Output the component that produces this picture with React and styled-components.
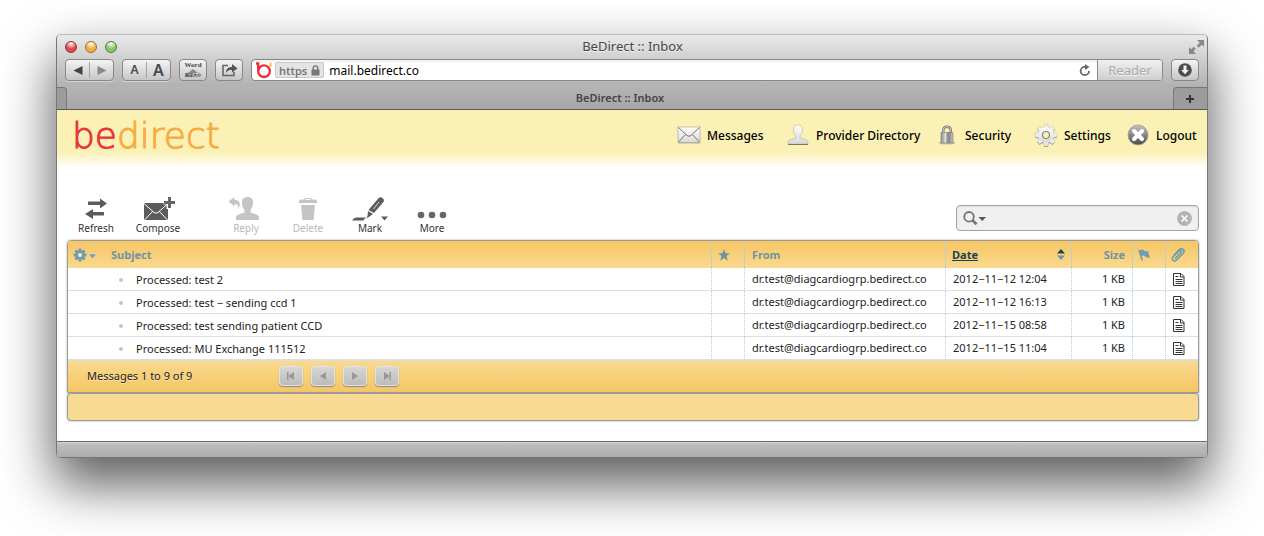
import React from 'react';
import styled, {createGlobalStyle} from 'styled-components';

const GlobalStyle = createGlobalStyle`
  * {
    box-sizing: border-box;
  }

  body {
    margin: 0;
    background: #fff;
    color: #222;
    font-family: 'Noto Sans', 'Open Sans', sans-serif;
    font-size: 11px;
  }

  button, input {
    font: inherit;
    color: inherit;
    border: none;
    padding: 0;
    background: none;
  }

  svg {
    display: block;
    flex: none;
  }
`;

const Desktop = styled.div`
  padding: 34px 56px 78px;
`;

const Window = styled.div`
  border: 1px solid #777;
  border-top-color: #bbb;
  border-radius: 5px;
  overflow: hidden;
  background: #fff;
  box-shadow: 0 25px 52px 2px rgba(0, 0, 0, 0.64);
`;

const Chrome = styled.div`
  background: linear-gradient(#e9e9e9, #b1b1b1);
`;

const TitleBar = styled.div`
  display: grid;
  grid-template-columns: 60px 1fr 64px;
  align-items: center;
  height: 23px;
  padding: 0 3px 0 8px;
  font-size: 13px;
  line-height: 21px;
  color: #444;
  text-align: center;
  text-shadow: 0 1px 0 #f4f4f4;
`;

const Lights = styled.div`
  display: flex;
  gap: 8px;
`;

const Light = styled.button`
  width: 12px;
  height: 12px;
  border-radius: 50%;
  border: 1px solid ${props => props.$edge};
  background: radial-gradient(circle at 50% 15%, #fff, ${props => props.$color} 55%, ${props => props.$color});
`;

const Expand = styled.button`
  justify-self: end;
`;

const BrowserBar = styled.div`
  display: flex;
  gap: 8px;
  height: 29px;
  padding: 1px 8px 6px;
`;

const ChromeButton = styled.button`
  display: flex;
  flex-direction: column;
  align-items: center;
  justify-content: center;
  flex: none;
  width: 28px;
  height: 22px;
  border: 1px solid #888;
  border-radius: 4px;
  background: linear-gradient(#f4f4f4, #c6c6c6);
  color: #444;
`;

const ButtonPair = styled.div`
  display: flex;
  flex: none;
  width: 49px;
  height: 22px;
  border: 1px solid #888;
  border-radius: 4px;
  background: linear-gradient(#f4f4f4, #c6c6c6);
  box-shadow: 0 1px 0 #d4d4d4;
`;

const PairButton = styled.button`
  display: flex;
  flex: 1;
  align-items: center;
  justify-content: center;
  margin: 2px 0;
  color: #4a4a4a;
  font-size: ${props => props.$size || 12}px;
  font-weight: 600;
  line-height: 16px;

  & + & {
    border-left: 1px solid #a5a5a5;
  }
`;

const WordTop = styled.span`
  font-family: 'Liberation Serif', serif;
  font-size: 7px;
  font-weight: bold;
  line-height: 7px;
`;

const WordBottom = styled.span`
  font-family: 'Noto Sans CJK TC', sans-serif;
  font-size: 4px;
  font-weight: bold;
  line-height: 5px;
`;

const AddressBar = styled.div`
  display: flex;
  flex: 1;
  align-items: center;
  height: 22px;
  padding-left: 3px;
  overflow: hidden;
  border: 1px solid #888;
  border-radius: 4px;
  background: linear-gradient(#f0f0f0, #fff 4px);
`;

const Secure = styled.span`
  display: flex;
  align-items: center;
  gap: 4px;
  height: 16px;
  margin: 0 5px 0 3px;
  padding: 0 3px;
  border: 1px solid #c9c9c9;
  border-radius: 2px;
  background: #e4e4e4;
  color: #777;
  font-weight: 600;
`;

const Address = styled.input`
  flex: 1;
  min-width: 0;
  color: #000;
  font-size: 12px;
  outline: none;
`;

const Reader = styled.button`
  align-self: stretch;
  width: 65px;
  margin-left: 6px;
  border-left: 1px solid #888;
  background: linear-gradient(#f0f0f0, #cfcfcf);
  color: #aaa;
  font-size: 13px;
  line-height: 18px;
  text-shadow: 0 1px 0 #f4f4f4;
`;

const TabBar = styled.div`
  display: flex;
  justify-content: space-between;
  height: 23px;
  border-bottom: 1px solid #5a5a5a;
  background: linear-gradient(#b4b4b4, #a6a6a6);
  color: #444;
  font-weight: 600;
  line-height: 22px;
`;

const TabStub = styled.span`
  width: 10px;
  border: 1px solid #777;
  border-width: 1px 1px 0 0;
  border-radius: 0 4px 0 0;
  background: #9c9c9c;
`;

const NewTab = styled.button`
  display: flex;
  align-items: center;
  justify-content: center;
  width: 34px;
  border: 1px solid #777;
  border-width: 1px 0 0 1px;
  border-radius: 4px 0 0 0;
  background: #9c9c9c;
`;

const Header = styled.header`
  display: flex;
  justify-content: space-between;
  height: 58px;
  padding: 0 10px 0 15px;
  background: linear-gradient(#fbf1b5 72%, #fff);
`;

const Logo = styled.a`
  color: #f6ab40;
  font-family: 'DejaVu Sans', 'DejaVu Sans Light', sans-serif;
  font-size: 36px;
  font-weight: 200;
  line-height: 52px;
  text-decoration: none;
  -webkit-text-stroke: 1px;
`;

const LogoBe = styled.span`
  color: #e8333c;
`;

const Nav = styled.nav`
  display: grid;
  grid-template-columns: 109px 149px 99px 92px 71px;
  height: 50px;
`;

const NavLink = styled.a`
  display: flex;
  align-items: center;
  gap: 6px;
  color: #000;
  font-size: 12px;
  font-weight: 500;
  text-decoration: none;
  white-space: nowrap;
`;

const Mail = styled.main`
  padding: 28px 8px 20px 10px;
`;

const Toolbar = styled.div`
  display: flex;
  align-items: flex-start;
  justify-content: space-between;
  height: 44px;
`;

const Tools = styled.div`
  display: flex;
  margin-left: -2px;
`;

const Tool = styled.button`
  display: flex;
  flex-direction: column;
  align-items: center;
  width: 62px;
  margin-left: ${props => (props.$apart ? 26 : 0)}px;
  color: ${props => (props.disabled ? '#b8b8b8' : '#333')};
  font-size: 10px;
  line-height: 14px;
`;

const Search = styled.label`
  display: flex;
  align-items: center;
  gap: 2px;
  width: 243px;
  height: 26px;
  margin-top: 9px;
  padding: 0 6px;
  border: 1px solid #a3a3a3;
  border-radius: 4px;
  background: #f0f0f0;
  box-shadow: inset 0 1px 2px #ddd;
`;

const SearchInput = styled.input`
  flex: 1;
  min-width: 0;
  outline: none;
`;

const ListBox = styled.section`
  border: 1px solid #9a9a9a;
  border-radius: 4px 4px 0 0;
  overflow: hidden;
  box-shadow: 0 0 2px #999;
`;

const List = styled.table`
  width: 100%;
  table-layout: fixed;
  border-spacing: 0;
  white-space: nowrap;
`;

const Col = styled.col`
  width: ${props => props.$width}px;
`;

const HeadRow = styled.tr`
  background: linear-gradient(#f6c663, #f9d98f);
`;

const Head = styled.th`
  height: 27px;
  padding: 0 ${props => props.$pad || 7}px;
  border-left: ${props => (props.$plain ? 'none' : '1px solid #c2cfc6')};
  color: #7193a2;
  font-weight: 700;
  text-align: ${props => props.$align || 'left'};
`;

const HeadInner = styled.span`
  display: flex;
  align-items: center;
  justify-content: space-between;
`;

const SortLink = styled.a`
  color: #1c4053;
`;

const Cell = styled.td`
  height: 23px;
  padding: 0 ${props => props.$pad || 7}px;
  border-bottom: 1px solid #ddd;
  border-left: ${props => (props.$plain ? 'none' : '1px dotted #b0cbd6')};
  line-height: 20px;
  text-align: ${props => props.$align || 'left'};
`;

const Subject = styled.a`
  display: flex;
  align-items: center;
  gap: 13px;
  padding: 2px 0 0 8px;
  color: #222;
  text-decoration: none;

  &::before {
    content: '';
    width: 4px;
    height: 4px;
    border-radius: 50%;
    background: #c4c4c4;
  }
`;

const ListFooter = styled.div`
  display: flex;
  align-items: center;
  height: 32px;
  padding: 0 0 2px 19px;
  border-top: 1px solid #ddd;
  background: linear-gradient(#f9d98f, #f6c663);
`;

const Count = styled.span`
  width: 192px;
  text-shadow: 0 1px 0 #fbe6b5;
`;

const Pager = styled.div`
  display: flex;
  gap: 8px;
`;

const PageButton = styled.button`
  display: flex;
  align-items: center;
  justify-content: center;
  width: 24px;
  height: 20px;
  border: 1px solid #e4e4e4;
  border-radius: 4px;
  background: linear-gradient(#d6d6d6, #bcbcbc);
  box-shadow: 0 1px 1px #888;
`;

const Preview = styled.section`
  height: 28px;
  border: 1px solid #9a9a9a;
  border-radius: 4px;
  background: #f8da92;
  box-shadow: 0 0 2px #999;
`;

const StatusBar = styled.footer`
  height: 16px;
  border-top: 1px solid #6a6a6a;
  background: linear-gradient(#d8d8d8, #bdbdbd 2px, #adadad);
`;

const Arrow = ({left, color = '#444'}) => (
  <svg width="10" height="9" viewBox="0 0 10 9">
    <path d={left ? 'M9.5 0v9L.5 4.5z' : 'M.5 0v9l9-4.5z'} fill={color} />
  </svg>
);

const ExpandIcon = () => (
  <svg width="15" height="14" viewBox="0 0 15 14" fill="#888">
    <path d="M8 0h7v7l-2.2-2.2-3 3-2.1-2 3-3zM0 7l2.2 2.2 2.5-2.5 2.1 2.1-2.5 2.5L7 14H0z" />
  </svg>
);

const ShareIcon = () => (
  <svg width="17" height="14" viewBox="0 0 17 14">
    <path d="M7 2.5H2v10h11V9" fill="none" stroke="#666" strokeWidth="1.6" />
    <path d="M5 10c0-4 2-6 6-6V1l5.5 4.5L11 9.5V7C8 7 6.5 7.5 5 10z" fill="#555" />
  </svg>
);

const Favicon = () => (
  <svg width="17" height="17" viewBox="0 0 17 17" fill="none" stroke="#ea3340" strokeWidth="2.4">
    <path d="M1 1.500h2.200V9" />
    <circle cx="9" cy="9.200" r="5.800" />
    <path d="M15.500 1v4" stroke="#f5b233" strokeWidth="1.8" />
  </svg>
);

const SmallLock = () => (
  <svg width="9" height="11" viewBox="0 0 9 11">
    <path d="M2.2 5V3.2a2.3 2.3 0 0 1 4.6 0V5" fill="none" stroke="#777" strokeWidth="1.4" />
    <rect x=".5" y="4.5" width="8" height="6" rx=".5" fill="#777" />
  </svg>
);

const ReloadIcon = () => (
  <svg width="12" height="13" viewBox="0 0 12 13">
    <path d="M10 7a4.2 4.2 0 1 1-4.2-4.2H7" fill="none" stroke="#666" strokeWidth="1.8" />
    <path d="M6 0l4.5 3L6 6z" fill="#666" />
  </svg>
);

const DownloadIcon = () => (
  <svg width="14" height="14" viewBox="0 0 14 14">
    <circle cx="7" cy="7" r="6.8" fill="#4d4d4d" />
    <path d="M5.5 2.5h3V7h2.3L7 11.2 3.2 7h2.3z" fill="#f2f2f2" />
  </svg>
);

const PlusIcon = () => (
  <svg width="8" height="8" viewBox="0 0 8 8" stroke="#333" strokeWidth="2">
    <path d="M4 0v8M0 4h8" />
  </svg>
);

const Metal = ({id, dark}) => (
  <defs>
    <linearGradient id={id} x1="0" y1="0" x2="0" y2="1">
      <stop offset="0" stopColor={dark ? '#c4c4c4' : '#fff'} />
      <stop offset="1" stopColor={dark ? '#4a4a4a' : '#d8d8d8'} />
    </linearGradient>
  </defs>
);

const MessagesIcon = () => (
  <svg width="24" height="18" viewBox="0 0 24 18">
    <Metal id="paper" />
    <rect x="1" y="1.5" width="22" height="16" fill="#a39c78" opacity=".7" />
    <rect x="1" y="1" width="22" height="15.5" fill="url(#paper)" stroke="#a29f91" strokeWidth=".6" />
    <path d="M1.5 1.5l8.5 8q2 1.6 4 0l8.5-8M1.5 16l7-7.5M22.5 16l-7-7.5" fill="none" stroke="#77746a" />
  </svg>
);

const PersonIcon = () => (
  <svg width="24" height="22" viewBox="0 0 24 22">
    <Metal id="person" />
    <path d="M12 1c3.2 0 4.8 2.2 4.6 5-.2 2.5-1.2 4.500-2.600 5.500v2.300l6.500 2.200q1.500.8 1.500 2.500V20H2v-1.500Q2 16.800 3.500 16l6.500-2.200v-2.300C8.600 10.500 7.600 8.500 7.400 6 7.200 3.200 8.800 1 12 1z" fill="url(#person)" stroke="#b5b097" strokeWidth=".6" />
    <path d="M2 20.5h20" stroke="#77746a" />
  </svg>
);

const LockIcon = () => (
  <svg width="24" height="20" viewBox="0 0 24 20">
    <defs>
      <linearGradient id="lock">
        <stop offset="0" stopColor="#888" />
        <stop offset=".35" stopColor="#eee" />
        <stop offset=".6" stopColor="#888" />
        <stop offset="1" stopColor="#c4c4c4" />
      </linearGradient>
    </defs>
    <ellipse cx="12" cy="18" rx="8.5" ry="1.6" fill="#b5ad80" opacity=".7" />
    <path d="M8.2 8V5.5c0-5 7.6-5 7.6 0V8" fill="none" stroke="#666" strokeWidth="2.4" />
    <path d="M8.2 8V5.5c0-5 7.6-5 7.6 0V8" fill="none" stroke="#ddd" strokeWidth="1" />
    <path d="M6 7.5h12V18H6z" fill="url(#lock)" stroke="#777" strokeWidth=".6" />
    <path d="M9 8v10M12 8v10M15 8v10" stroke="#777" strokeWidth=".4" />
  </svg>
);

const teeth = [0, 45, 90, 135, 180, 225, 270, 315];

const SettingsIcon = () => (
  <svg width="24" height="24" viewBox="-12 -12 24 24">
    <Metal id="gear" />
    <g transform="translate(0 1)" fill="#a39f87">
      {teeth.map(a => (
        <path key={a} d="M-2.8-6L-1.8-11h3.6L2.8-6z" transform={`rotate(${a})`} />
      ))}
      <circle r="8" />
    </g>
    {teeth.map(a => (
      <path key={a} d="M-2.8-6L-1.8-11h3.6L2.8-6z" transform={`rotate(${a})`} fill="#ececea" stroke="#bdb99f" strokeWidth=".4" />
    ))}
    <circle r="7.8" fill="url(#gear)" />
    <circle r="3.5" fill="#fbf1b5" stroke="#888573" strokeWidth="1.2" />
  </svg>
);

const LogoutIcon = () => (
  <svg width="24" height="22" viewBox="0 0 24 22">
    <Metal id="exit" dark />
    <circle cx="12" cy="11" r="10" fill="url(#exit)" stroke="#9c9c94" strokeWidth=".8" />
    <path d="M8 7l8 8M16 7l-8 8" stroke="#fff" strokeWidth="4" strokeLinecap="round" />
  </svg>
);

const RefreshIcon = () => (
  <svg width="24" height="25" viewBox="0 0 24 25" fill="#5c5c5c">
    <path d="M4 5.5h12V2.5L23 7.5l-7 5V9H4zM20 16H9V13L1 18l8 5v-3.5h11z" />
  </svg>
);

const ComposeIcon = () => (
  <svg width="34" height="25" viewBox="0 0 34 25">
    <path d="M3 7h24v17H3z" fill="#5c5c5c" />
    <path d="M3 7.5l10 9q2 1.4 4 0l10-9M3.5 24l8.5-9M26.5 24l-8.5-9" fill="none" stroke="#fff" strokeWidth="1" />
    <path d="M28 0v13M22.5 6H34" stroke="#fff" strokeWidth="5" />
    <path d="M28.5 1v11M23 6.5h11" stroke="#666" strokeWidth="3" />
  </svg>
);

const ReplyIcon = () => (
  <svg width="34" height="25" viewBox="0 0 34 25" fill="#c4c4c4">
    <path d="M18.500 1c4.200 0 5.800 2.800 5.500 6.200-.2 3-1.200 5.300-2.500 6.800v2.500l6 2q2.500.8 2.500 3V24H7v-2.500q0-2.200 2.500-3l6-2V14c-1.300-1.500-2.300-3.800-2.500-6.800C12.700 3.800 14.300 1 18.500 1z" />
    <path d="M-.5 5.500l6-4.500v3c5 0 7 3 3.500 9.500C10 9.500 9 8 5.500 8v2.500z" />
  </svg>
);

const DeleteIcon = () => (
  <svg width="20" height="25" viewBox="0 0 20 25" fill="#c4c4c4">
    <path d="M1 7V5.500q0-2 2-2h3L7 2h6l1 1.500h3q2 0 2 2V7zM3 9h14l-1.500 15h-11z" />
    <path d="M7.5 3.5h5" stroke="#fff" />
  </svg>
);

const MarkIcon = () => (
  <svg width="36" height="25" viewBox="0 0 36 25" fill="#5c5c5c">
    <path d="M26.5 2.2Q28.5.5 30.5 2t1.300 3.500L22 17l-5.500-3z" />
    <path d="M16 15l5 3-3.5 2.5-3 2 1-2.5z" />
    <path d="M27 6l-5.500 7" stroke="#ddd" />
    <path d="M4 21.5h10L11 24.500H0q1.500-2.500 4-3zM29 20.500h7l-3.500 4z" />
  </svg>
);

const MoreIcon = () => (
  <svg width="30" height="25" viewBox="0 0 30 25" fill="#666">
    <circle cx="4" cy="19" r="3.3" />
    <circle cx="15" cy="19" r="3.3" />
    <circle cx="26" cy="19" r="3.3" />
  </svg>
);

const SearchIcon = () => (
  <svg width="23" height="15" viewBox="0 0 23 15">
    <circle cx="6" cy="5.8" r="4.8" fill="none" stroke="#777" strokeWidth="1.8" />
    <path d="M9.2 9l4.3 4.3" stroke="#777" strokeWidth="2.8" />
    <path d="M15.5 6h7.5l-3.7 4z" fill="#555" />
  </svg>
);

const ClearIcon = () => (
  <svg width="15" height="15" viewBox="0 0 15 15">
    <circle cx="7.5" cy="7.5" r="7.4" fill="#b3b3b3" />
    <path d="M4.5 4.5l6 6M10.5 4.5l-6 6" stroke="#fff" strokeWidth="1.6" />
  </svg>
);

const OptionsIcon = () => (
  <svg width="25" height="14" viewBox="-7 -7 25 14" fill="#6e9bb0">
    {teeth.map(a => (
      <path key={a} d="M-1.4-6.5h2.8v4h-2.8z" transform={`rotate(${a})`} />
    ))}
    <circle r="4.8" />
    <circle r="2.1" fill="#fbe9bd" />
    <path d="M8.5-1h8l-4 4.500z" stroke="#fbe9bd" strokeWidth=".5" />
  </svg>
);

const StarIcon = () => (
  <svg width="12" height="12" viewBox="0 0 12 12">
    <path d="M6 0l1.5 4.2H12L8.500 7l1.300 4.700L6 9l-3.800 2.700L3.500 7 0 4.200h4.500z" fill="#6a93a8" />
  </svg>
);

const SortIcon = () => (
  <svg width="8" height="11" viewBox="0 0 8 11">
    <path d="M0 4.5L4 0l4 4.5z" fill="#1c4053" />
    <path d="M0 6.5L4 11l4-4.5z" fill="#7193a2" />
  </svg>
);

const FlagIcon = () => (
  <svg width="12" height="12" viewBox="0 0 12 12">
    <path d="M.8 1L4.3 11.5" stroke="#6e9bb0" strokeWidth="1.4" />
    <path d="M1.5 1.500Q4-.5 6 1.500t4.500.3Q10 5 12 8.500q-3 .5-5-1.200T3.200 8z" fill="#6e9bb0" />
  </svg>
);

const ClipIcon = () => (
  <svg width="14" height="14" viewBox="0 0 14 14">
    <path d="M4 10.5l6-6c1.5-1.5-.3-3-1.8-1.700L2.300 8.500C-.5 11.300 3 14.500 5.500 12l6.300-6.300C15 2.500 11.200-.8 8.300 1.700L3 7" fill="none" stroke="#6e9bb0" strokeWidth="1.6" />
  </svg>
);

const DocIcon = () => (
  <svg width="12" height="13" viewBox="0 0 12 13" fill="none" stroke="#333">
    <path d="M.5.5h7.500l3 3v9H.5zM7.500.5V4H11M2.500 3.500h3M2.500 6.500h7M2.500 8.500h7M2.500 10.500h7" />
  </svg>
);

const PageIcon = ({left, end}) => (
  <svg width="10" height="10" viewBox="0 0 10 10" fill="#989898">
    <path d={left ? 'M8 1v8L2 5z' : 'M2 1v8l6-4z'} />
    {end && <path d={left ? 'M1 1h1.5v8H1z' : 'M7.5 1H9v8H7.5z'} />}
  </svg>
);

const links = [
  {label: 'Messages', Icon: MessagesIcon},
  {label: 'Provider Directory', Icon: PersonIcon},
  {label: 'Security', Icon: LockIcon},
  {label: 'Settings', Icon: SettingsIcon},
  {label: 'Logout', Icon: LogoutIcon},
];

const tools = [
  {label: 'Refresh', Icon: RefreshIcon},
  {label: 'Compose', Icon: ComposeIcon},
  {label: 'Reply', Icon: ReplyIcon, disabled: true, apart: true},
  {label: 'Delete', Icon: DeleteIcon, disabled: true},
  {label: 'Mark', Icon: MarkIcon},
  {label: 'More', Icon: MoreIcon},
];

const messages = [
  {subject: 'Processed: test 2', date: '2012−11−12 12:04'},
  {subject: 'Processed: test − sending ccd 1', date: '2012−11−12 16:13'},
  {subject: 'Processed: test sending patient CCD', date: '2012−11−15 08:58'},
  {subject: 'Processed: MU Exchange 111512', date: '2012−11−15 11:04'},
];

const BrowserChrome = () => (
  <>
    <Chrome>
      <TitleBar>
        <Lights>
          <Light aria-label="Close" $color="#e0474c" $edge="#8f3236" />
          <Light aria-label="Minimize" $color="#efb23e" $edge="#9a6c2a" />
          <Light aria-label="Zoom" $color="#86c964" $edge="#4c7f3c" />
        </Lights>
        <span>BeDirect :: Inbox</span>
        <Expand aria-label="Full screen"><ExpandIcon /></Expand>
      </TitleBar>
      <BrowserBar>
        <ButtonPair>
          <PairButton aria-label="Back"><Arrow left /></PairButton>
          <PairButton aria-label="Forward"><Arrow color="#888" /></PairButton>
        </ButtonPair>
        <ButtonPair>
          <PairButton>A</PairButton>
          <PairButton $size={16}>A</PairButton>
        </ButtonPair>
        <ChromeButton>
          <WordTop>Word</WordTop>
          <svg width="10" height="4" viewBox="0 0 10 4"><path d="M0 4l5-4 5 4z" fill="#888" /></svg>
          <WordBottom>翻譯大小</WordBottom>
        </ChromeButton>
        <ChromeButton aria-label="Share"><ShareIcon /></ChromeButton>
        <AddressBar>
          <Favicon />
          <Secure>https<SmallLock /></Secure>
          <Address aria-label="Address" defaultValue="mail.bedirect.co" />
          <button aria-label="Reload"><ReloadIcon /></button>
          <Reader disabled>Reader</Reader>
        </AddressBar>
        <ChromeButton aria-label="Downloads"><DownloadIcon /></ChromeButton>
      </BrowserBar>
    </Chrome>
    <TabBar>
      <TabStub />
      <span>BeDirect :: Inbox</span>
      <NewTab aria-label="New tab"><PlusIcon /></NewTab>
    </TabBar>
  </>
);

const MessageList = () => (
  <ListBox>
    <List>
      <colgroup>
        <Col $width={36} />
        <col />
        <Col $width={33} />
        <Col $width={201} />
        <Col $width={126} />
        <Col $width={61} />
        <Col $width={33} />
        <Col $width={33} />
      </colgroup>
      <thead>
        <HeadRow>
          <Head $plain $pad={5}><OptionsIcon /></Head>
          <Head $plain>Subject</Head>
          <Head $pad={6}><StarIcon /></Head>
          <Head>From</Head>
          <Head $pad={6}>
            <HeadInner><SortLink href="#date">Date</SortLink><SortIcon /></HeadInner>
          </Head>
          <Head $align="right">Size</Head>
          <Head $pad={5}><FlagIcon /></Head>
          <Head $pad={5}><ClipIcon /></Head>
        </HeadRow>
      </thead>
      <tbody>
        {messages.map(({subject, date}) => (
          <tr key={subject}>
            <Cell $plain />
            <Cell $plain><Subject href="#message">{subject}</Subject></Cell>
            <Cell />
            <Cell>dr.test@diagcardiogrp.bedirect.co</Cell>
            <Cell>{date}</Cell>
            <Cell $align="right">1 KB</Cell>
            <Cell />
            <Cell><DocIcon /></Cell>
          </tr>
        ))}
      </tbody>
    </List>
    <ListFooter>
      <Count>Messages 1 to 9 of 9</Count>
      <Pager>
        <PageButton disabled aria-label="First page"><PageIcon left end /></PageButton>
        <PageButton disabled aria-label="Previous page"><PageIcon left /></PageButton>
        <PageButton disabled aria-label="Next page"><PageIcon /></PageButton>
        <PageButton disabled aria-label="Last page"><PageIcon end /></PageButton>
      </Pager>
    </ListFooter>
  </ListBox>
);

const App = () => (
  <Desktop>
    <GlobalStyle />
    <Window>
      <BrowserChrome />
      <Header>
        <Logo href="#home"><LogoBe>be</LogoBe>direct</Logo>
        <Nav>
          {links.map(({label, Icon}) => (
            <NavLink key={label} href="#nav"><Icon />{label}</NavLink>
          ))}
        </Nav>
      </Header>
      <Mail>
        <Toolbar>
          <Tools>
            {tools.map(({label, Icon, disabled, apart}) => (
              <Tool key={label} disabled={disabled} $apart={apart}><Icon />{label}</Tool>
            ))}
          </Tools>
          <Search>
            <SearchIcon />
            <SearchInput aria-label="Search" />
            <button aria-label="Clear"><ClearIcon /></button>
          </Search>
        </Toolbar>
        <MessageList />
        <Preview />
      </Mail>
      <StatusBar />
    </Window>
  </Desktop>
);

export default App;
